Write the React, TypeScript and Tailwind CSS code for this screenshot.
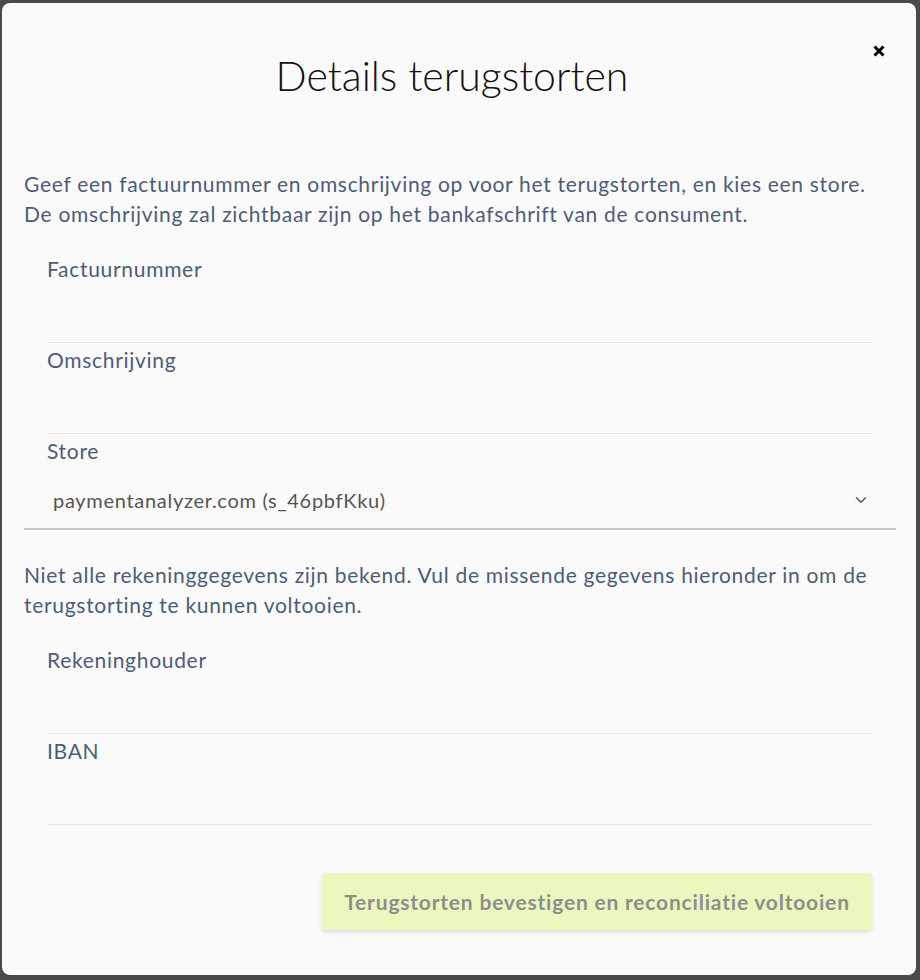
import { ChevronDown } from "lucide-react";

const Field = ({ label }: { label: string }) => {
  return (
    <div className="mx-[45px] mb-[3px] mr-[44px]">
      <label className="block h-[28px] text-[21px] leading-[28px] tracking-[0.7px] text-[#4b5d7a]">{label}</label>
      <input className="block h-[60px] w-full border-b border-[#e6e8ea] bg-transparent outline-none" />
    </div>
  );
};

const App = () => {
  return (
    <div className="h-[980px] w-[920px] bg-[#4a4a4a] pl-[2px] pt-[3px]" style={{ fontFamily: "Lato, 'Open Sans', sans-serif" }}>
      <div className="relative h-[972px] w-[914px] rounded-[8px] bg-[#fafafa]">
        {/* close button */}
        <button className="absolute right-[30px] top-[41px] flex h-[14px] w-[14px] items-center justify-center">
          <svg width="12" height="12" viewBox="0 0 12 12">
            <path d="M1.5 1.5 L10.5 10.5 M10.5 1.5 L1.5 10.5" stroke="#000" strokeWidth="3" />
          </svg>
        </button>

        <h2 className="pr-[14px] pt-[49px] text-center text-[41px] font-light leading-[48px] text-[#111]">Details terugstorten</h2>

        <p className="mt-[69px] px-[22px] text-[21px] leading-[30px] tracking-[0.7px] text-[#4b5d7a]">
          Geef een factuurnummer en omschrijving op voor het terugstorten, en kies een store.
          <br />
          De omschrijving zal zichtbaar zijn op het bankafschrift van de consument.
        </p>

        <div className="mt-[26px]">
          <Field label="Factuurnummer" />
          <Field label="Omschrijving" />

          {/* store select */}
          <div className="mx-[45px] mr-[44px]">
            <label className="block h-[28px] text-[21px] leading-[28px] tracking-[0.7px] text-[#4b5d7a]">Store</label>
          </div>
          <div className="ml-[22px] mr-[20px] flex items-center justify-between border-b-2 border-[#cacaca] pb-[14px] pl-[29px] pr-[26px] pt-[21px]">
            <span className="text-[20px] leading-[28px] tracking-[0.7px] text-[#555]">paymentanalyzer.com (s_46pbfKku)</span>
            <ChevronDown size={18} strokeWidth={2} className="text-[#555]" />
          </div>
        </div>

        <p className="mt-[30px] px-[22px] text-[21px] leading-[30px] tracking-[0.7px] text-[#4b5d7a]">
          Niet alle rekeninggegevens zijn bekend. Vul de missende gegevens hieronder in om de
          <br />
          terugstorting te kunnen voltooien.
        </p>

        <div className="mt-[26px]">
          <Field label="Rekeninghouder" />
          <Field label="IBAN" />
        </div>

        <div className="mr-[44px] mt-[48px] flex justify-end">
          <button className="h-[57px] w-[550px] rounded-[4px] bg-[#e9f8bd] text-[21px] font-bold tracking-[0.8px] text-[#8e8e8e] shadow-[0_2px_4px_rgba(0,0,0,0.12)]">
            Terugstorten bevestigen en reconciliatie voltooien
          </button>
        </div>
      </div>
    </div>
  );
};

export default App;
